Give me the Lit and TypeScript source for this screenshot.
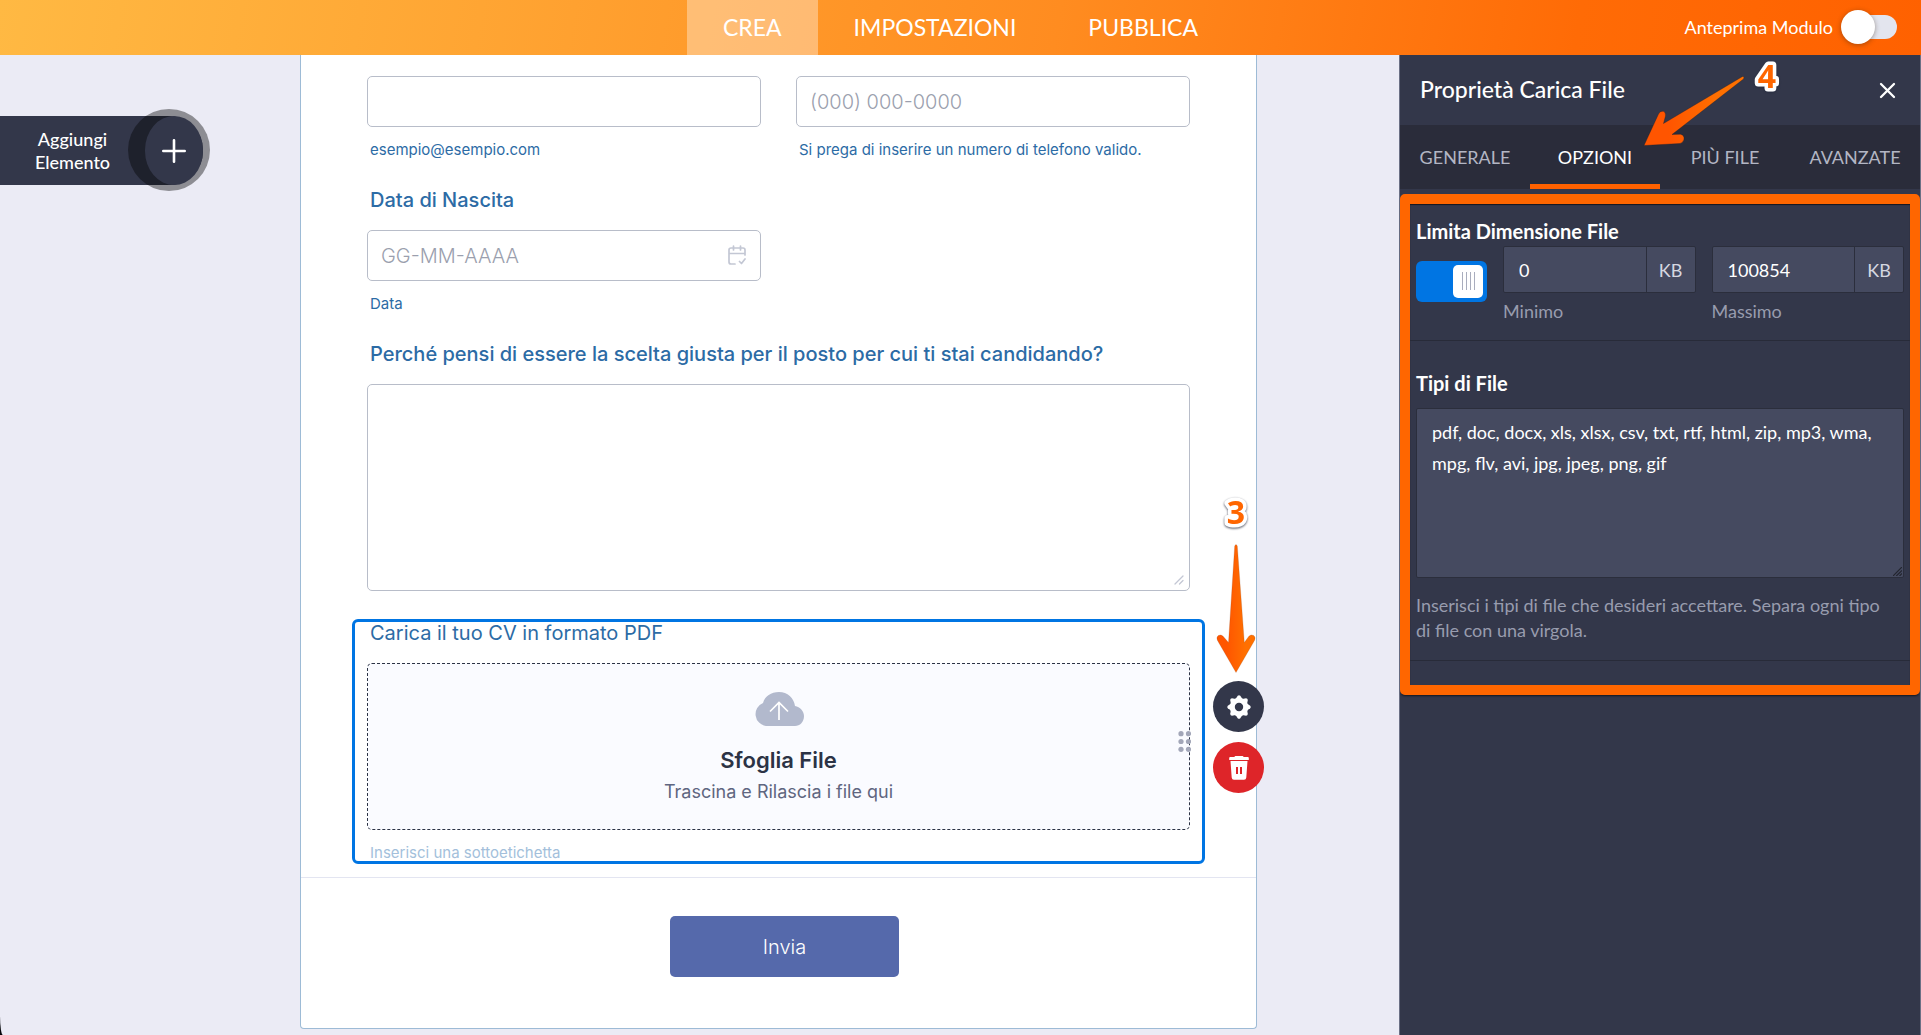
import { LitElement, html, css, svg } from "lit";
import { customElement, state } from "lit/decorators.js";
import { classMap } from "lit/directives/class-map.js";

const arrowGradient = (id: string) => svg`
  <defs>
    <linearGradient id=${id} x1="0" y1="0" x2="1" y2="0">
      <stop offset="0.25" stop-color="#ff5500"></stop>
      <stop offset="0.75" stop-color="#ff7000"></stop>
    </linearGradient>
  </defs>`;

const stepNumber = (n: string) => html`
  <svg class="num" width="36" height="40" viewBox="0 0 36 40">
    <text x="18" y="31" text-anchor="middle">${n}</text>
  </svg>`;

const stepStyles = css`
  .num {
    overflow: visible;
    font: 700 32px "Open Sans", sans-serif;
    fill: #ff6600;
    stroke: #fff;
    stroke-width: 7px;
    stroke-linejoin: round;
    paint-order: stroke;
    filter: drop-shadow(0 1px 1px rgba(35, 40, 60, 0.8));
  }
`;

@customElement("top-bar")
class TopBar extends LitElement {
  static styles = css`
    :host { display: block; }
    .bar {
      display: grid;
      grid-template-columns: 1fr auto 1fr;
      height: 55px;
      background: linear-gradient(100deg, #ffb943 0%, #ffa533 25%, #ff8c20 55%, #ff6b06 82%, #ff6100 100%);
      color: #fff;
      font-family: Lato, sans-serif;
    }
    .tabs { display: flex; grid-column: 2; }
    .tab {
      display: flex;
      align-items: center;
      padding: 0 36px 2px;
      color: #fff;
      font-size: 23px;
      text-decoration: none;
    }
    .tab.on { background: rgba(255, 255, 255, 0.35); }
    .preview {
      display: flex;
      align-items: center;
      justify-content: flex-end;
      gap: 8px;
      padding-right: 24px;
      padding-bottom: 1px;
      font-size: 18px;
    }
    .switch {
      appearance: none;
      position: relative;
      width: 56px;
      height: 34px;
      margin: 0;
    }
    .switch::before {
      content: "";
      position: absolute;
      inset: 5px 0 5px 12px;
      border-radius: 12px;
      background: #e3e5ee;
    }
    .switch::after {
      content: "";
      position: absolute;
      left: 0;
      top: 0;
      width: 34px;
      height: 34px;
      border-radius: 50%;
      background: #fff;
      box-shadow: 0 1px 5px rgba(60, 40, 20, 0.45);
    }
  `;
  render() {
    return html`
      <header class="bar">
        <nav class="tabs">
          <a class="tab on" href="#crea">CREA</a>
          <a class="tab" href="#impostazioni">IMPOSTAZIONI</a>
          <a class="tab" href="#pubblica">PUBBLICA</a>
        </nav>
        <label class="preview">Anteprima Modulo<input class="switch" type="checkbox" /></label>
      </header>
    `;
  }
}

@customElement("form-canvas")
class FormCanvas extends LitElement {
  static styles = [stepStyles, css`
    :host { display: block; flex: 1; max-width: 957px; }
    * { box-sizing: border-box; }
    .card {
      border: 1px solid #9dbbd6;
      border-top: 0;
      border-radius: 0 0 4px 4px;
      background: #fff;
      font-family: Inter, sans-serif;
      color: #2c6ba5;
    }
    .fields { display: flex; flex-direction: column; padding: 21px 66px 13px; gap: 27px; }
    .row { display: grid; grid-template-columns: 1fr 1fr; column-gap: 35px; }
    .field { display: flex; flex-direction: column; min-width: 0; }
    .label { margin: 0 3px 18px; font-size: 20px; line-height: 24px; font-weight: 500; }
    .label.light { font-weight: 400; }
    .sub { margin: 12px 3px 0; font-size: 15px; line-height: 22px; }
    .sub.faint { color: #a3bfdb; }
    .box {
      width: 100%;
      height: 51px;
      padding: 0 13px;
      border: 1px solid #b8bdc9;
      border-radius: 5px;
      background: #fff;
      font: 300 20px Inter, sans-serif;
      color: #2c3345;
    }
    .box::placeholder { color: #9b9fae; opacity: 1; }
    .holder { position: relative; display: flex; }
    .area { height: 207px; padding: 13px; resize: none; }
    .cal { position: absolute; right: 14px; top: 15px; }
    .grip { position: absolute; right: 6px; bottom: 6px; }
    .selected {
      position: relative;
      margin: 1px -15px 0;
      padding: 2px 15px 0;
      border-radius: 6px;
      outline: 3px solid #0075e3;
      outline-offset: -3px;
    }
    .drop {
      display: flex;
      flex-direction: column;
      align-items: center;
      height: 167px;
      padding-top: 28px;
      border: 1px dashed #2c3345;
      border-radius: 5px;
      background: #fafbff;
      font-family: Inter, sans-serif;
    }
    .browse { margin-top: 19px; font-size: 22px; line-height: 30px; font-weight: 600; color: #2c3345; }
    .hint { margin-top: 4px; font-size: 18px; line-height: 26px; color: #5f6680; }
    .drag { position: absolute; right: 14px; top: 112px; }
    .tools {
      position: absolute;
      left: calc(100% + 8px);
      top: 62px;
      display: flex;
      flex-direction: column;
      gap: 10px;
    }
    .tool {
      display: grid;
      place-items: center;
      width: 51px;
      height: 51px;
      padding: 0;
      border: 0;
      border-radius: 50%;
      background: #33374a;
    }
    .tool.del { background: #de2529; }
    .step {
      position: absolute;
      left: 100%;
      top: -126px;
      width: 62px;
      display: flex;
      flex-direction: column;
      align-items: center;
    }
    .arrow { margin-top: 10px; }
    .send { display: flex; justify-content: center; padding: 38px 0 51px; border-top: 1px solid #e3e5f1; }
    .submit {
      width: 229px;
      height: 61px;
      margin-left: 12px;
      border: 0;
      border-radius: 5px;
      background: #5569ab;
      color: #fff;
      font: 300 20px Inter, sans-serif;
    }
  `];
  render() {
    return html`
      <form class="card">
        <div class="fields">
          <div class="row">
            <div class="field">
              <input class="box" id="mail" type="email" />
              <label class="sub" for="mail">esempio@esempio.com</label>
            </div>
            <div class="field">
              <input class="box" id="tel" type="tel" placeholder="(000) 000-0000" />
              <label class="sub" for="tel">Si prega di inserire un numero di telefono valido.</label>
            </div>
          </div>
          <div class="row">
            <div class="field">
              <label class="label" for="birth">Data di Nascita</label>
              <div class="holder">
                <input class="box" id="birth" type="text" placeholder="GG-MM-AAAA" />
                <svg class="cal" width="20" height="21" viewBox="0 0 20 21" fill="none" stroke="#c3c7d4" stroke-width="1.7" stroke-linecap="round" stroke-linejoin="round">
                  <path d="M8 19H4a2 2 0 0 1-2-2V5a2 2 0 0 1 2-2h12a2 2 0 0 1 2 2v5M2 8.500h16M6.500 1v4M13.500 1v4M12.500 16.500l2 2 3.500-4.500"></path>
                </svg>
              </div>
              <label class="sub" for="birth">Data</label>
            </div>
          </div>
          <div class="field">
            <label class="label" for="why">Perché pensi di essere la scelta giusta per il posto per cui ti stai candidando?</label>
            <div class="holder">
              <textarea class="box area" id="why"></textarea>
              <svg class="grip" width="10" height="10" viewBox="0 0 10 10" stroke="#c3c7d4" stroke-width="1.300" stroke-linecap="round">
                <path d="M1 9L9 1M5.500 9L9 5.500"></path>
              </svg>
            </div>
          </div>
          <div class="field selected">
            <span class="label light">Carica il tuo CV in formato PDF</span>
            <button class="drop" type="button">
              <svg width="50" height="34" viewBox="0 0 50 34">
                <path fill="#b2b9cd" d="M12 34a12 12 0 0 1-3-23C11 4 17 0 25 0c8.500 0 15 6 16 14 5 1 9 5 9 10 0 6-4 10-9 10z"></path>
                <path d="M25 28V11M16 19.500L25 10.500l9 9" fill="none" stroke="#fff" stroke-width="1.700"></path>
              </svg>
              <span class="browse">Sfoglia File</span>
              <span class="hint">Trascina e Rilascia i file qui</span>
            </button>
            <span class="sub faint">Inserisci una sottoetichetta</span>
            <svg class="drag" width="13" height="21" viewBox="0 0 13 21" fill="#a2a6b8">
              <circle cx="3" cy="2.700" r="2.600"></circle><circle cx="10.500" cy="2.700" r="2.600"></circle>
              <circle cx="3" cy="10.500" r="2.600"></circle><circle cx="10.500" cy="10.500" r="2.600"></circle>
              <circle cx="3" cy="18.300" r="2.600"></circle><circle cx="10.500" cy="18.300" r="2.600"></circle>
            </svg>
            <div class="tools">
              <button class="tool" type="button" aria-label="Proprietà">
                <svg width="24" height="24" viewBox="-12 -12 24 24" fill="#fff">
                  <circle r="6.700" fill="none" stroke="#fff" stroke-width="5"></circle>
                  ${[0, 45, 90, 135, 180, 225, 270, 315].map(
                    (a) => svg`<path transform="rotate(${a})" d="M-3.400-8L-1.300-11.200Q0-12.200 1.300-11.200L3.400-8z"></path>`
                  )}
                </svg>
              </button>
              <button class="tool del" type="button" aria-label="Elimina">
                <svg width="20" height="24" viewBox="0 0 20 24">
                  <path fill="#fff" d="M5.500 1q0-1 1-1h7q1 0 1 1h4.300q1 0 1 1v2H.2V2q0-1 1-1z"></path>
                  <path fill="#fff" fill-rule="evenodd" d="M1.500 5h17L17.300 21.500q-.2 2.200-2.300 2.200H5q-2.100 0-2.300-2.200zM7 11v7h2V11zM11 11v7h2V11z"></path>
                </svg>
              </button>
            </div>
            <div class="step">
              ${stepNumber("3")}
              <svg class="arrow" width="40" height="131" viewBox="0 0 40 131">
                ${arrowGradient("down")}
                <path fill="url(#down)" stroke="#8a4a20" stroke-opacity=".35" stroke-width=".6" d="M18.700 3q1.300-3 2.600 0l7 96.500 4.600-6.300q2.300-2.200 4.800-.7 2.300 2 .8 5L20 129.500 1.500 97.500q-1.500-3 .8-5 2.500-1.500 4.800.7l5.400 6.300z"></path>
              </svg>
            </div>
          </div>
        </div>
        <div class="send"><button class="submit" type="button">Invia</button></div>
      </form>
    `;
  }
}

@customElement("properties-panel")
class PropertiesPanel extends LitElement {
  @state() tab = "OPZIONI";
  static styles = [stepStyles, css`
    :host { display: block; flex: none; width: 522px; }
    * { box-sizing: border-box; }
    .panel {
      position: relative;
      height: 100%;
      border-left: 1px solid #6b7085;
      border-right: 1px solid #6b7085;
      background: #33374a;
      color: #fff;
      font-family: Lato, sans-serif;
    }
    .head { display: flex; align-items: center; justify-content: space-between; height: 70px; padding: 0 24px 0 20px; }
    .title { margin: 0; padding-bottom: 2px; font-size: 23px; font-weight: 500; }
    .close { display: grid; padding: 0; border: 0; background: none; }
    .tabs { display: grid; grid-template-columns: repeat(4, 1fr); height: 64px; background: #2a2c3a; }
    .tab {
      padding: 0;
      border: 0;
      border-bottom: 5px solid transparent;
      border-top: 5px solid transparent;
      background: none;
      color: #b3b6c4;
      font: 400 18px Lato, sans-serif;
    }
    .tab.on { color: #fff; border-bottom-color: #ff6100; }
    .body {
      margin-top: 5px;
      padding-bottom: 24px;
      border: 10px solid #ff6600;
      border-radius: 5px;
      box-shadow: 0 2px 2px -1px #14161f, inset 0 1px 1px #14161f;
    }
    .group { padding: 15px 6px 18px; border-bottom: 1px solid #282b39; }
    .group.types { padding: 30px 6px 17px; }
    .name { display: block; margin: 0; font-size: 20px; line-height: 24px; font-weight: 700; }
    .limits { display: grid; grid-template-columns: 71px 1fr 1fr; column-gap: 16px; margin-top: 3px; }
    .toggle {
      appearance: none;
      position: relative;
      width: 71px;
      height: 41px;
      margin: 15px 0 0;
      border-radius: 6px;
      background: #0075e3;
    }
    .toggle::after {
      content: "";
      position: absolute;
      right: 4px;
      top: 4px;
      width: 30px;
      height: 33px;
      border-radius: 5px;
      background:
        repeating-linear-gradient(90deg, #a9adbd 0 1px, transparent 1px 4px) 9px 7px / 13px 18px no-repeat,
        #fff;
    }
    .unit { display: grid; grid-template-columns: 1fr 48px; height: 47px; border: 1px solid #2b2e3c; border-radius: 2px; background: #454a60; }
    .value {
      width: 100%;
      min-width: 0;
      padding: 0 15px;
      border: 0;
      border-right: 1px solid #2b2e3c;
      background: none;
      color: #fff;
      font: 400 18px Lato, sans-serif;
    }
    .kb { display: grid; place-items: center; color: #d5d7e0; font-size: 18px; }
    .cap { display: block; margin-top: 7px; font-size: 18px; line-height: 22px; color: #989cae; }
    .holder { position: relative; display: flex; margin-top: 13px; }
    .types-box {
      width: 100%;
      height: 170px;
      padding: 8px 15px;
      border: 1px solid #2b2e3c;
      border-radius: 2px;
      background: #454a60;
      color: #fff;
      font: 400 18px/31px Lato, sans-serif;
      resize: none;
    }
    .grip { position: absolute; right: 2px; bottom: 2px; }
    .help { margin: 15px 0 0; padding-right: 12px; font-size: 18px; line-height: 25px; color: #989cae; }
    .step { position: absolute; left: 242px; top: 0; width: 146px; height: 96px; pointer-events: none; }
    .arrow { position: absolute; left: 0; top: 20px; }
    .step .num { position: absolute; right: 3px; top: 2px; }
  `];
  render() {
    return html`
      <aside class="panel">
        <div class="head">
          <h2 class="title">Proprietà Carica File</h2>
          <button class="close" type="button" aria-label="Chiudi">
            <svg width="17" height="17" viewBox="0 0 17 17" stroke="#fff" stroke-width="2.300" stroke-linecap="round">
              <path d="M2 2l13 13M15 2L2 15"></path>
            </svg>
          </button>
        </div>
        <div class="tabs">
          ${["GENERALE", "OPZIONI", "PIÙ FILE", "AVANZATE"].map(
            (t) => html`<button type="button" class=${classMap({ tab: true, on: this.tab === t })} @click=${() => (this.tab = t)}>${t}</button>`
          )}
        </div>
        <div class="body">
          <section class="group">
            <label class="name" for="limit">Limita Dimensione File</label>
            <div class="limits">
              <input class="toggle" id="limit" type="checkbox" checked />
              <div>
                <div class="unit"><input class="value" id="min" type="text" value="0" /><span class="kb">KB</span></div>
                <label class="cap" for="min">Minimo</label>
              </div>
              <div>
                <div class="unit"><input class="value" id="max" type="text" value="100854" /><span class="kb">KB</span></div>
                <label class="cap" for="max">Massimo</label>
              </div>
            </div>
          </section>
          <section class="group types">
            <label class="name" for="types">Tipi di File</label>
            <div class="holder">
              <textarea class="types-box" id="types" .value=${"pdf, doc, docx, xls, xlsx, csv, txt, rtf, html, zip, mp3, wma, mpg, flv, avi, jpg, jpeg, png, gif"}></textarea>
              <svg class="grip" width="9" height="9" viewBox="0 0 9 9" stroke="#23252f" stroke-width="1.200">
                <path d="M0 9L9 0M3.300 9L9 3.300M6.500 9L9 6.500"></path>
              </svg>
            </div>
            <p class="help">Inserisci i tipi di file che desideri accettare. Separa ogni tipo di file con una virgola.</p>
          </section>
        </div>
        <div class="step">
          <svg class="arrow" width="104" height="74" viewBox="0 0 104 74">
            ${arrowGradient("diag")}
            <path fill="url(#diag)" stroke="#1c1e28" stroke-opacity=".5" stroke-width=".7" d="M100.500 1.500q2.500 0 1 2.500L30 59.500l8.500-.3q4 1 3.500 5-.6 3.300-4 4.300L2 70.500 16.500 39q1.500-3.500 5-2.700 2.500 1.400 2 4.700l-2 7.500z"></path>
          </svg>
          ${stepNumber("4")}
        </div>
      </aside>
    `;
  }
}

@customElement("app-root")
class AppRoot extends LitElement {
  static styles = css`
    :host { display: block; background: #05060a; }
    * { box-sizing: border-box; }
    .page {
      display: flex;
      flex-direction: column;
      min-height: 100vh;
      overflow: hidden;
      border-bottom-left-radius: 3px 20px;
      background: #ebebf5;
    }
    .work { display: flex; flex: 1; }
    .rail { flex: none; width: 158px; padding-top: 61px; }
    .center { display: flex; flex: 1; justify-content: center; align-items: flex-start; min-width: 0; }
    .add {
      position: relative;
      display: flex;
      align-items: center;
      width: 203px;
      height: 69px;
      padding: 0;
      border: 0;
      border-radius: 0 34px 34px 0;
      background: #33374a;
      color: #fff;
      font: 500 18px/23px Lato, sans-serif;
    }
    .text { width: 145px; white-space: nowrap; display: flex; flex-direction: column; align-items: center; }
    .halo { position: absolute; left: 128px; top: -7px; width: 82px; height: 82px; border-radius: 50%; background: rgba(0, 0, 0, 0.4); }
    .plus {
      position: relative;
      display: grid;
      place-items: center;
      width: 58px;
      height: 69px;
      border-radius: 29px / 34px;
      background: #33374a;
    }
  `;
  render() {
    return html`
      <div class="page">
        <top-bar></top-bar>
        <div class="work">
          <div class="rail">
            <button class="add" type="button">
              <span class="text"><span>Aggiungi</span><span>Elemento</span></span>
              <span class="halo"></span>
              <span class="plus">
                <svg width="24" height="24" viewBox="0 0 24 24" stroke="#fff" stroke-width="2.600" stroke-linecap="round">
                  <path d="M12 1.300v21.400M1.300 12h21.400"></path>
                </svg>
              </span>
            </button>
          </div>
          <main class="center"><form-canvas></form-canvas></main>
          <properties-panel></properties-panel>
        </div>
      </div>
    `;
  }
}
